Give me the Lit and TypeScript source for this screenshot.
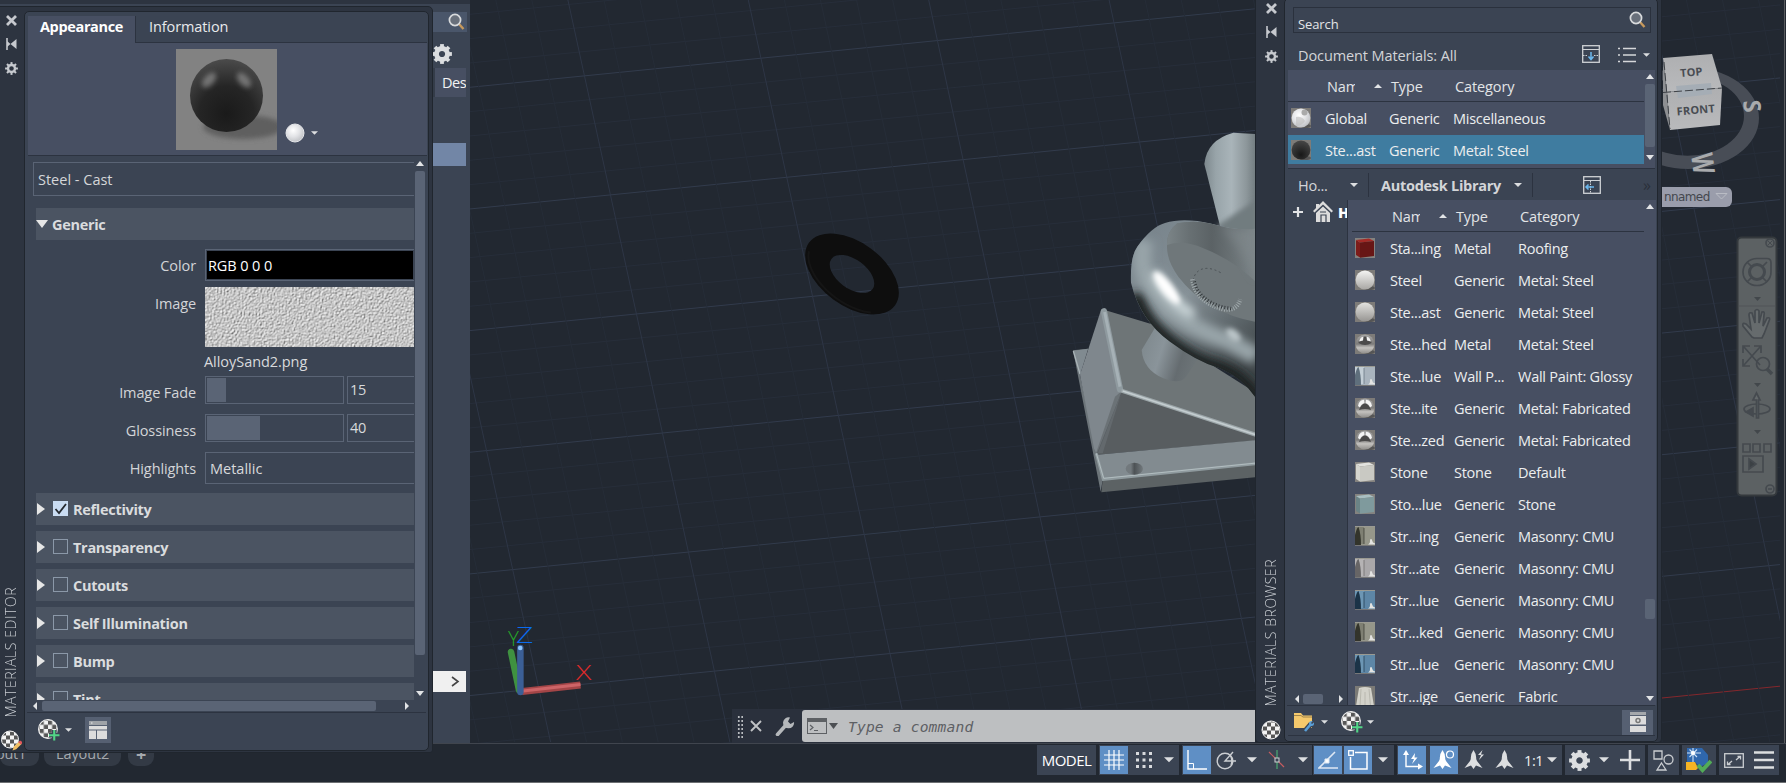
import { LitElement, html, svg, css, nothing } from "lit";
import { customElement } from "lit/decorators.js";

type Material = { kind: string; name: string; type: string; category: string };

const LIBRARY: Material[] = [
  { kind: "redcube", name: "Sta...ing", type: "Metal", category: "Roofing" },
  { kind: "matte", name: "Steel", type: "Generic", category: "Metal: Steel" },
  { kind: "cast", name: "Ste...ast", type: "Generic", category: "Metal: Steel" },
  { kind: "polished", name: "Ste...hed", type: "Metal", category: "Metal: Steel" },
  { kind: "paint", name: "Ste...lue", type: "Wall P...", category: "Wall Paint: Glossy" },
  { kind: "chrome", name: "Ste...ite", type: "Generic", category: "Metal: Fabricated" },
  { kind: "chrome", name: "Ste...zed", type: "Generic", category: "Metal: Fabricated" },
  { kind: "stone", name: "Stone", type: "Stone", category: "Default" },
  { kind: "bluestone", name: "Sto...lue", type: "Generic", category: "Stone" },
  { kind: "walltan", name: "Str...ing", type: "Generic", category: "Masonry: CMU" },
  { kind: "wallgray", name: "Str...ate", type: "Generic", category: "Masonry: CMU" },
  { kind: "wallblue", name: "Str...lue", type: "Generic", category: "Masonry: CMU" },
  { kind: "walltan", name: "Str...ked", type: "Generic", category: "Masonry: CMU" },
  { kind: "wallblue", name: "Str...lue", type: "Generic", category: "Masonry: CMU" },
  { kind: "fabric", name: "Str...ige", type: "Generic", category: "Fabric" },
];

const SECTIONS = [
  { label: "Reflectivity", on: true },
  { label: "Transparency", on: false },
  { label: "Cutouts", on: false },
  { label: "Self Illumination", on: false },
  { label: "Bump", on: false },
  { label: "Tint", on: false },
];

const cube = (top: string, front: string, side: string) => svg`
  <rect width="20" height="20" fill="#84827f"/>
  <path d="M1 2L5 4.500V19.500L1 17z" fill="${side}"/>
  <path d="M1 2L14 .5L19 3L5 4.500z" fill="${top}"/>
  <path d="M5 4.500L19 3V18L5 19.700z" fill="${front}"/>`;

const wall = (dark: string, mid: string, light: string) => svg`
  <rect width="20" height="20" fill="${mid}"/>
  <rect width="20" height="1" fill="#9a9a92"/>
  <path d="M0 1H9V18H0z" fill="${light}"/>
  <path d="M0 19V9Q2 1 3.500 1Q6 8 6 19z" fill="${dark}"/>
  <path d="M9 2V18" stroke="${dark}" stroke-width=".7"/>
  <path d="M13 18.500q2.500-1 2-5l1.500-.5 1.500 3.500 2 1v1z" fill="#e4e4e2"/>
  <path d="M0 19.500H20" stroke="#777" stroke-width="1"/>`;

const ball = (fill: string) => svg`
  <rect width="20" height="20" fill="#7d7b78"/>
  <ellipse cx="14" cy="18" rx="6" ry="2" fill="#555"/>
  <circle cx="10" cy="10" r="9.400" fill="${fill}"/>`;

const THUMBS: Record<string, unknown> = {
  global: svg`${ball("url(#gWhite)")}<path d="M5 9q6-1 9 4-3 5-9 5" fill="#bcbcbc" opacity=".6"/><circle cx="13.500" cy="4.500" r="3" fill="#aaa"/>`,
  dark: ball("url(#gDarkS)"),
  redcube: cube("#a42a26", "#671615", "#7d1c1a"),
  matte: ball("url(#gMatte)"),
  cast: ball("url(#gCast)"),
  polished: svg`${ball("url(#gChrome)")}<path d="M3.500 9Q4 3 10 2.500Q16 3 16.500 9Q10 13 3.500 9" fill="#4c4b4b"/><path d="M4 7.500Q5 3 8.500 2.800L8 6.500zM16 7.500Q15 3 11.500 2.800L12 6.500z" fill="#f2f2f2"/>`,
  chrome: svg`${ball("url(#gChrome)")}<path d="M4 12Q6 6 10 5.500Q14 6 16 12Q10 10 4 12" fill="#4a4949"/><path d="M3 8Q4 2 9 1.800L9.500 5Q6 6 5 9.500zM17 8Q16 2 11 1.800L10.500 5Q14 6 15 9.500z" fill="#f4f4f4"/>`,
  paint: wall("#5f6f7c", "#a9b4be", "#c3ced6"),
  stone: cube("#e2e2de", "#c9c9c3", "#d6d6d0"),
  bluestone: cube("#a9bfc2", "#7f9a9d", "#6a8386"),
  walltan: wall("#33342b", "#96978a", "#7f8073"),
  wallgray: wall("#676566", "#aaa8aa", "#b5b3b4"),
  wallblue: wall("#1b3347", "#5d86a6", "#6c96b4"),
  fabric: svg`<rect width="20" height="20" fill="#7b7a76"/><path d="M4 2Q10 0 16 2L19 20H1z" fill="#d3d2ca"/><path d="M6 3L5 20M10 6V20M14 3L15.500 20" stroke="#b5b4ab" stroke-width=".9" fill="none"/>`,
};

const thumb = (kind: string) => html`<svg class="thumb" viewBox="0 0 20 20">${THUMBS[kind]}</svg>`;

const caret = (cls = "") => html`<svg class="caret ${cls}" width="8" height="4" viewBox="0 0 8 4"><path d="M0 0H8L4 4z" fill="currentColor"/></svg>`;
const tri = (d: string, w: number, h: number) => html`<svg width=${w} height=${h} viewBox="0 0 ${w} ${h}"><path d=${d} fill="#e2e4e6"/></svg>`;
const up = () => tri("M0 5L4 0L8 5z", 8, 5);
const down = () => tri("M0 0H8L4 5z", 8, 5);
const left = () => tri("M4 0V8L0 4z", 4, 8);
const right = () => tri("M0 0V8L4 4z", 4, 8);

const teeth = (n: number, r: number, w: number) =>
  Array.from({ length: n }, (_, i) => svg`<rect x=${-w / 2} y=${-r} width=${w} height=${r * 0.5} transform="rotate(${(i * 360) / n})"/>`);
const gear = (size: number, color = "#dcdee0") => html`<svg width=${size} height=${size} viewBox="-10 -10 20 20" fill=${color}>
  ${teeth(8, 9.9, 3.8)}<circle r="5.500" fill="none" stroke=${color} stroke-width="4.800"/></svg>`;
const sun = () => html`<svg width="13" height="13" viewBox="-6.500 -6.500 13 13" fill="#c6c9ce">
  <circle r="3.500" fill="none" stroke="#c6c9ce" stroke-width="2.400"/>
  ${teeth(8, 6.4, 2)}</svg>`;
const magnifier = () => html`<svg width="17" height="18" viewBox="0 0 17 18"><path d="M11 11l4.500 5" stroke="#c7995c" stroke-width="2.400"/>
  <circle cx="7" cy="7" r="5.600" fill="#69707b" stroke="#d8dadc" stroke-width="1.700"/></svg>`;
const checker = (size: number, extra: unknown = nothing) => html`<svg width=${size} height=${size} viewBox="0 0 21 21">
  <circle cx="9.500" cy="9.500" r="9" fill="url(#check)" stroke="#eee" stroke-width="1"/>${extra}</svg>`;
const plus = svg`<path d="M15.500 10.500V20.500M10.500 15.500H20.500" stroke="#3b4453" stroke-width="4.500"/><path d="M15.500 10.500V20.500M10.500 15.500H20.500" stroke="#52d586" stroke-width="2"/>`;
const pencil = svg`<path d="M12 20.500l1.200-3.700 5.300-5.200 2.500 2.500-5.300 5.200z" fill="#f1bd62"/><path d="M17.800 12.200l1.700-1.700 2 1.200v1.800l-1 1z" fill="#e2585c"/>`;

const stripTools = () => html`
  <svg width="11" height="11" viewBox="0 0 11 11"><path d="M1 1l9 9M10 1l-9 9" stroke="#c6c9ce" stroke-width="2.800"/></svg>
  <svg width="11" height="12" viewBox="0 0 11 12"><path d="M1 0V12" stroke="#c6c9ce" stroke-width="1.600"/><path d="M1 3V9L4.500 6z M10.500 1V11L4.500 6z" fill="#c6c9ce"/></svg>
  ${sun()}`;

/** Perspective construction grid; every fifth line is a major one. */
const gridLines = () => {
  const out = [];
  for (let i = -22; i < 36; i++) {
    const y = 87.3 + i * 24.33;
    const axis = i === 30;
    out.push(svg`<path d="M${axis ? 1660 : 400} ${y - (axis ? 119 : -7)}L1780 ${y - 131}" stroke=${axis ? "#85282d" : i % 5 === 0 ? "#323b4c" : "#272e3a"}/>`);
  }
  for (let i = -6; i < 44; i++) {
    out.push(svg`<path d="M${387.5 + i * 36.08} 0L${550.6 + i * 35.86} 742" stroke=${i % 5 === 0 ? "#2e3646" : "#262d38"}/>`);
  }
  return out;
};

const RING = "M213 488Q210 410 232 380Q275 320 315 309Q370 292 455 311Q540 335 590 325V838Q550 775 480 745Q410 725 330 665Q240 600 213 488z";

const model = () => svg`<g transform="translate(1060 120) scale(.33333)">
  <path d="M433 132Q440 60 520 38L590 42V330L480 318z" fill="url(#gPost)"/>
  <path d="M470 318Q540 270 590 240V500L480 330z" fill="#717b7f" filter="url(#blur6)"/>
  <path d="M39 691L84 686 60 764 128 1080 122 1115z" fill="#6c7479"/>
  <path d="M41 692L84 686 60 764z" fill="#808a90"/>
  <path d="M40 693L60 762" stroke="#a9b3b7" stroke-width="4"/>
  <path d="M122 573L134 570 186 812 110 1002 102 985 60 764z" fill="#7f878d"/>
  <path d="M134 570L286 616 400 700 590 820V945L186 812z" fill="#6e7577"/>
  <path d="M186 812L590 945V962L112 1004z" fill="#585d60"/>
  <path d="M186 812L165 830 108 1000 128 1000z" fill="#666d71" opacity=".8"/>
  <path d="M132 574L180 808" stroke="#8f9a9f" stroke-width="19" stroke-linecap="round"/>
  <path d="M134 576L180 800" stroke="#a6b1b6" stroke-width="9" filter="url(#blur2)"/>
  <path d="M184 812L590 945" stroke="#9da7aa" stroke-width="12" filter="url(#blur2)"/>
  <path d="M188 813L590 945" stroke="#c4cdd0" stroke-width="5" filter="url(#blur1)"/>
  <path d="M112 1004L590 960V1032L128 1080z" fill="#828b90"/>
  <path d="M128 1080L590 1030V1071L124 1117z" fill="#5c6264"/>
  <path d="M109 1000L130 1078L590 1031" fill="none" stroke="#8f9a9e" stroke-width="9"/>
  <path d="M109 1000L131 1075L590 1029" fill="none" stroke="#b2bdc0" stroke-width="3"/>
  <ellipse cx="223" cy="1046" rx="26" ry="18" fill="url(#gHole)"/>
  <path d="M286 622L245 690Q250 750 310 775Q360 795 378 770L420 708z" fill="url(#gPin)"/>
  <path d="${RING}" fill="url(#gRing)"/>
  <clipPath id="ringClip"><path d="${RING}"/></clipPath>
  <g clip-path="url(#ringClip)">
    <path d="M225 520Q240 600 325 668Q400 730 480 750Q550 780 595 850" fill="none" stroke="#1c2224" stroke-width="56" filter="url(#blur14)"/>
    <path d="M255 360Q225 450 300 530Q370 620 500 660L590 710" fill="none" stroke="#98a4a9" stroke-width="54" filter="url(#blur14)"/>
    <path d="M285 460Q320 540 400 585" fill="none" stroke="#cfdadd" stroke-width="30" filter="url(#blur14)"/>
    <ellipse cx="320" cy="503" rx="60" ry="18" transform="rotate(52 320 503)" fill="#fff" filter="url(#blur6)"/>
    <ellipse cx="520" cy="645" rx="26" ry="14" transform="rotate(40 520 645)" fill="#bcc6c9" filter="url(#blur6)"/>
    <path d="M592 640V800" stroke="#b6c0c5" stroke-width="26" filter="url(#blur6)"/>
    <path d="M352 310Q320 335 321 375Q319 420 355 470Q440 580 590 606V325Q530 335 455 311Q400 300 352 310z" fill="#6f777a"/>
    <path d="M352 310Q320 335 321 375Q370 358 430 385Q520 420 590 488V325Q530 335 455 311Q400 300 352 310z" fill="url(#gInner)"/>
    <path d="M484 318Q540 330 590 322V480Q550 400 484 318z" fill="#858e92" opacity=".5" filter="url(#blur14)"/>
  </g>
  <path d="M482 458Q440 435 415 453Q400 465 398 490" fill="none" stroke="#444b4e" stroke-width="2.500" stroke-dasharray="6 8"/>
  <path d="M397 478Q405 545 490 568Q530 575 541 538" fill="none" stroke="#9fa8ab" stroke-width="13" stroke-dasharray="3 4"/>
  <path d="M403 484Q414 540 490 562L515 566" fill="none" stroke="#34393c" stroke-width="10" stroke-dasharray="3 6"/>
</g>`;

const navBar = () => svg`<g transform="translate(1737 237)" fill="none" stroke="#454a4f" stroke-width="1.700">
  <rect x=".5" y=".5" width="39" height="258" rx="4" fill="#5c6163" stroke="#34393d" stroke-width="2"/>
  <circle cx="33" cy="6" r="4"/><path d="M31 4l4 4M35 4l-4 4" stroke-width="1"/>
  <path d="M20 21.500H30Q34 21.500 34 26V35A14 13.500 0 1 1 20 21.500z"/><circle cx="20" cy="35" r="7.500" stroke-width="3"/><path d="M10 25l5 5M10 45l5-5M30 45l-5-5M30 25l-5 5"/>
  <path d="M2 69H38M2 253" stroke="#505559" stroke-width="1"/>
  <path d="M17 60h7l-3.500 4zM17 146h7l-3.500 4zM17 193h7l-3.500 4z" fill="#42474b" stroke="none"/>
  <path d="M15 100L6 89Q5 85 9 87L14 92L12 78Q12 75 15 76L18 86V74Q20 71 22 74V86L25 75Q28 74 27 78L26 89L30 81Q34 80 32 84L27 97L25 101H17z" fill="#666b6d"/>
  <path d="M7 110L23 128M23 110L7 128M6 116V109H13M17 109H24V116M6 122V129H13"/><circle cx="26" cy="127" r="6.500"/><path d="M30 132l5 5" stroke-width="3.500"/>
  <ellipse cx="20" cy="172" rx="13" ry="5"/><path d="M19.500 181V163H16L19.500 156L23 163H21.500V181z" fill="#64696b"/><path d="M9 175l7-4v8z" fill="#454a4f"/>
  <path d="M6 207h7v8H6zM16 207h7v8h-7zM27 207h7v8h-7zM6 219H26V235H6z"/><path d="M12 222v10l7-5z" fill="#3c4145"/>
  <circle cx="33" cy="252" r="4"/><path d="M31 252h4" stroke-width="1.500"/>
</g>`;

@customElement("app-root")
export class AppRoot extends LitElement {
  static styles = css`
    :host { display: block; position: relative; width: 1786px; height: 783px; overflow: hidden; background: #222831;
      font-family: "Open Sans", "Noto Sans", sans-serif; font-size: 14.5px; letter-spacing: -0.25px; color: #e3e5e7; }
    * { box-sizing: border-box; }
    svg { display: block; flex: none; }
    .scene { position: absolute; left: 0; top: 0; background: #222831; }
    .window { position: absolute; }
    .grow { flex: 1; }
    .col { display: flex; flex-direction: column; }
    .row { display: flex; align-items: center; }
    .caret { color: #dcdee0; }

    /* layer palette behind the editor */
    .layers { left: 0; top: 0; width: 470px; height: 744px; background: #3b4453; border-top: 4px solid #2d3440; border-bottom: 1px solid #4c5360; padding-left: 433px; }
    .layers .find { margin-top: 8px; height: 20px; width: 34px; background: #4a566a; padding: 1px 0 0 15px; }
    .layers .cog { margin-top: 12px; margin-left: -1px; }
    .layers .head { margin-top: 4px; width: 33px; height: 29px; background: #474f62; border-left: 2px solid #343c49; padding-left: 7px; overflow: hidden; color: #f2f3f4; }
    .layers .head { line-height: 29px; letter-spacing: -0.4px; }
    .layers .pick { margin-top: 46px; width: 33px; height: 23px; background: #7286a6; }
    .layers .more { margin-top: 505px; width: 33px; height: 21px; background: #f0f0f0; padding-left: 18px; }

    .layouts { left: 0; top: 744px; height: 22px; width: 160px; gap: 5px; align-items: stretch; color: #a5a9ae; }
    .layouts span { background: #333a45; border-radius: 0 0 9px 9px; line-height: 20px; }
    .layouts .l1 { width: 39px; overflow: hidden; direction: rtl; padding-right: 13px; }
    .layouts .l2 { width: 77px; padding-left: 12px; letter-spacing: -0.1px; }
    .layouts .add { width: 26px; text-align: center; font-weight: 700; font-size: 18px; margin-left: 2px; }

    /* palette frames */
    .palette { background: #2d3440; border: 1px solid #20262e; display: flex; }
    .strip { width: 24px; align-items: center; }
    .strip .tools { display: flex; flex-direction: column; gap: 12px; align-items: center; }
    .strip .title { writing-mode: vertical-rl; transform: rotate(180deg); color: #c9cdd2; font-weight: 300; line-height: 18px; font-size: 14px; white-space: nowrap; }
    .body { background: #3b4453; border: 1px solid #20262e; border-radius: 5px; }

    .editor { left: -1px; top: 6px; width: 434px; height: 747px; border-radius: 0 5px 3px 0; border-color: #20262e; }
    .editor .strip { padding: 8px 2px 1px 0; }
    .editor .title { letter-spacing: 0.55px; }
    .editor .body { width: 405px; height: 740px; margin-top: 4px; padding: 4px 2px 0; }
    .tabs { height: 27px; margin-left: 1px; width: 399px; color: #e8eaec; }
    .tab { width: 108px; height: 27px; background: #474f62; border-right: 1px solid #2c3340; font-weight: 700; text-align: center; line-height: 22px; color: #fff; letter-spacing: -0.35px; }
    .tab2 { flex: 1; height: 27px; border-bottom: 1px solid #2c3340; padding-left: 13px; line-height: 21px; letter-spacing: -0.1px; }
    .preview { height: 113px; width: 399px; margin-left: 1px; background: #474f62; border-bottom: 1px solid #2c3340; display: flex; padding: 6px 0 0 148px; }
    .preview .pick { margin: 74px 0 0 8px; gap: 6px; height: 20px; }
    .preview .caret { width: 7px; }
    .scroller { height: 556px; margin-left: 6px; width: 393px; display: grid; grid-template: 1fr 12px / 382px 10px; }
    .form { overflow: hidden; padding-top: 6px; width: 381px; }
    .name { height: 34px; border: 1px solid #5a6475; border-right: 0; line-height: 33px; padding-left: 4px; color: #d5d7d9; letter-spacing: 0; }
    .section { height: 32px; margin: 0 0 6px 3px; background: #4b5462; display: flex; align-items: center; font-weight: 700; letter-spacing: -0.3px; color: #dadcde; }
    .section.first { margin: 12px 0 9px 3px; gap: 4px; padding-bottom: 0; }
    .section .box { width: 15px; height: 15px; border: 1px solid #8b98a8; margin: 0 5px 1px 8px; }
    .section .box.on { background: #c9dcf2; border-color: #c9dcf2; }
    .field { display: grid; grid-template-columns: 163px 209px; column-gap: 9px; }
    .label { text-align: right; color: #d3d5d8; line-height: 20px; letter-spacing: -0.1px; }
    .input { border: 1px solid #5a6475; border-right: 0; color: #d8dadc; padding-left: 4px; }
    .f1 { height: 38px; } .f1 .label { padding-top: 7px; }
    .f1 .input { height: 32px; padding: 1px 1px 1px 1px; }
    .f1 .black { background: #000; height: 28px; line-height: 29px; color: #fff; padding-left: 1px; margin: 0; letter-spacing: -0.1px; }
    .f2 { height: 89px; } .f2 .label { padding-top: 7px; }
    .f2 .file { line-height: 29px; color: #d8dadc; margin-left: -1px; letter-spacing: -0.05px; }
    .f3 { height: 38px; } .f3 .label { padding-top: 7px; }
    .f3 .pair { display: grid; grid-template-columns: 139px 67px; gap: 3px; height: 28px; }
    .f3 .track { border: 1px solid #5a6475; padding: 1px; }
    .f3 .fill { height: 24px; background: #5a6475; }
    .f3 .input { line-height: 26px; padding-left: 2px; }
    .f4 { height: 41px; } .f4 .label { padding-top: 7px; }
    .f4 .input { height: 32px; line-height: 31px; letter-spacing: 0; }
    .vbar { display: flex; flex-direction: column; align-items: center; }
    .vbar .thumbv { width: 10px; background: #5a6475; border-radius: 2px; }
    .editor .vbar { padding-top: 5px; }
    .editor .vbar .thumbv { height: 484px; margin: 5px 0 36px; }
    .hbar { display: flex; align-items: center; }
    .hbar .thumbh { height: 10px; background: #5a6475; border-radius: 2px; }
    .editor .hbar .thumbh { width: 334px; margin: 0 29px 0 5px; }
    .etool { border-top: 1px solid #2c3340; height: 36px; padding: 0 0 1px 11px; gap: 5px; }
    .etool .btn, .btool .btn { background: #566072; display: grid; place-items: center; }
    .etool .caret, .btool .caret { width: 7px; }
    .etool .btn { width: 26px; height: 26px; margin-left: 8px; }

    /* browser palette */
    .browser { left: 1255px; top: -3px; width: 407px; height: 746px; border-radius: 0 0 4px 4px; }
    .browser .strip { width: 28px; padding: 5px 0 0 2px; }
    .browser .title { letter-spacing: 0.55px; margin-top: 0; }
    .browser .body { width: 374px; height: 744px; padding: 8px 2px 0; }
    .search { margin: 0 4px 0 6px; height: 26px; border: 1px solid #2a313d; display: flex; align-items: center; padding: 7px 4px 0 4px; font-size: 13px; justify-content: space-between; letter-spacing: -0.1px; }
    .search svg { margin-top: -8px; }
    .docs { height: 37px; padding: 7px 5px 0 11px; color: #d3d5d8; letter-spacing: -0.1px; }
    .docs .ic { margin-right: 18px; margin-top: -2px; }
    .docs .list { margin-right: 7px; }
    .docs .caret { width: 7px; }
    .table { background: #474f62; color: #eceeef; white-space: nowrap; }
    .doc { height: 99px; margin-left: 1px; display: grid; grid-template-columns: 356px 12px; border-bottom: 1px solid #2c3340; }
    .thead { display: grid; align-items: center; border-bottom: 1px solid #2c3340; color: #e3e5e7; height: 32px; padding: 1px 0 0 39px; letter-spacing: -0.12px; }
    .thead.a { grid-template-columns: 28px 19px 17px 64px 1fr; }
    .thead.b { margin-left: 4px; grid-template-columns: 28px 19px 17px 64px 1fr; padding-left: 40px; }
    .nam { overflow: hidden; width: 28px; }
    .item { display: grid; align-items: center; grid-template-columns: 34px 64px 64px 1fr; height: 32px; padding: 1px 0 0 3px; }
    .item .thumb { width: 20px; height: 20px; margin-bottom: 1px; }
    .item.sel { background: #3f7ca0; height: 29px; margin-top: 1px; padding-top: 2px; }
    .lib .item { padding-left: 7px; padding-top: 0; grid-template-columns: 35px 64px 64px 1fr; }
    .lib .item .thumb { margin-bottom: 0; }
    .doc .vbar { padding: 4px 0 0; }
    .doc .vbar .thumbv { height: 63px; margin: 5px 0 8px; }
    .libbar { height: 31px; padding: 1px 0 0 11px; color: #d3d5d8; }
    .libbar .ho { width: 52px; }
    .libbar .sep { width: 1px; height: 24px; background: #2c3340; margin-left: 10px; }
    .libbar .lib-name { margin-left: 12px; width: 133px; font-weight: 700; letter-spacing: -0.28px; }
    .libbar .dock { margin-left: 50px; margin-top: -1px; } .libbar .more { margin-left: 42px; color: #2a303a; font-size: 16px; }
    .pane { display: grid; grid-template-columns: 61px 308px; height: 506px; border-bottom: 1px solid #2c3340; }
    .tree { border-right: 1px solid #2c3340; overflow: hidden; display: flex; flex-direction: column; justify-content: space-between; }
    .tree .node { display: flex; align-items: center; gap: 10px; padding: 1px 0 0 6px; color: #fff; font-weight: 700; }
    .tree .node b { margin-left: -5px; margin-top: 1px; }
    .tree .hbar { padding: 0 4px 1px 8px; gap: 4px; margin-bottom: 0; }
    .tree .thumbh { width: 20px; margin-right: 12px; }
    .lib { display: grid; grid-template-columns: 296px 12px; height: 505px; overflow: hidden; }
    .lib .rows { height: 473px; overflow: hidden; }
    .lib .vbar { padding-top: 4px; }
    .lib .vbar .thumbv { height: 20px; margin: 390px 0 77px; }
    .btool { height: 30px; margin-left: 1px; padding: 3px 2px 0 6px; border-bottom: 1px solid #2c3340; }
    .btool .btn { width: 31px; height: 25px; }
    .btool .a1 { margin: 0 13px 0 6px; }
    .btool .a2 { margin-left: 4px; }

    /* command line */
    .command { left: 732px; top: 709px; width: 523px; height: 34px; background: #2a303c; display: flex; align-items: center; padding: 0 0 0 5px; }
    .command .grip { width: 6px; height: 23px; margin-right: 7px; background: radial-gradient(circle, #b9bcc0 1px, transparent 1.3px) 0 0 / 3.500px 4px; }
    .command .entry { flex: 1; height: 32px; margin-left: 7px; background: #bdbfc1; border-radius: 3px 0 0 3px; display: flex; align-items: center; padding-left: 5px; color: #5d6064;
      font-family: "DejaVu Sans Mono", monospace; font-style: italic; font-size: 14.6px; letter-spacing: 0.17px; }
    .command .entry svg:nth-of-type(2) { margin: 0 10px 0 2px; }

    /* status bar */
    .status { left: 432px; top: 743px; width: 1354px; height: 40px; background: #222831; border-top: 1px solid #40454e; border-bottom: 1px solid #6d7073; padding: 1px 0 0 605px; display: flex; gap: 3px; }
    .floor { left: 0; top: 782px; height: 1px; width: 1786px; background: #6d7073; }
    .group { height: 30px; background: #3b4453; display: flex; align-items: center; padding: 0 1px; }
    .cell { width: 28px; height: 28px; display: grid; place-items: center; margin-right: 2px; }
    .cell.hot { background: #5f8fc5; }
    .group .caret { width: 10px; height: 5.500px; }
    .g0 { width: 59px; color: #fff; justify-content: center; letter-spacing: -0.5px; font-size: 15px; }
    .g1 { width: 80px; } .g1 .caret { margin-left: 4px; }
    .g2 { width: 130px; } .g2 .c1 { margin: 0 5px 0 4px; } .g2 .c2 { margin-left: 6px; }
    .g3 { width: 81px; margin-left: -2px; } .g3 .caret { margin-left: 4px; }
    .g4 { width: 165px; } .g4 .cell:nth-child(1) { margin-right: 4px; } .g4 .cell:nth-child(4) { margin-right: 1px; } .g4 span { margin: 0 4px 0 5px; color: #eceeef; letter-spacing: -0.4px; }
    .g5 { width: 50px; padding-left: 4px; gap: 9px; }
    .g6 { width: 30px; margin-left: -3px; justify-content: center; } .g7 { width: 31px; justify-content: center; } .g8 { width: 34px; justify-content: center; }
    .g9 { width: 60px; padding-left: 5px; gap: 10px; }
  `;

  render() {
    return html`
      ${this.scene()}
      ${this.layers()}
      <div class="window layouts row"><span class="l1">Layout1</span><span class="l2">Layout2</span><span class="add">+</span></div>
      ${this.command()} ${this.status()}
      <div class="window floor"></div>
      ${this.editor()} ${this.browser()}
    `;
  }

  private scene() {
    return html`<svg class="scene" width="1786" height="783" viewBox="0 0 1786 783">
      <defs>
        <linearGradient id="gPost"><stop offset="0" stop-color="#7d888d"/><stop offset=".22" stop-color="#98a4a9"/><stop offset=".52" stop-color="#a9b4b9"/><stop offset=".8" stop-color="#8d979b"/><stop offset="1" stop-color="#6f797d"/></linearGradient>
        <linearGradient id="gPin" x1="0" y1=".3" x2="1" y2=".6"><stop offset="0" stop-color="#7f898e"/><stop offset=".35" stop-color="#8a949a"/><stop offset=".7" stop-color="#656c70"/><stop offset="1" stop-color="#6e7679"/></linearGradient>
        <linearGradient id="gRing" x1="0" y1="0" x2=".6" y2="1"><stop offset="0" stop-color="#76828a"/><stop offset=".5" stop-color="#859096"/><stop offset="1" stop-color="#3f4649"/></linearGradient>
        <linearGradient id="gInner"><stop offset="0" stop-color="#7b8487"/><stop offset=".25" stop-color="#687073"/><stop offset=".5" stop-color="#5b6265"/><stop offset="1" stop-color="#7b8487"/></linearGradient>
        <linearGradient id="gHole"><stop offset=".3" stop-color="#72797d"/><stop offset=".5" stop-color="#4d5255"/><stop offset="1" stop-color="#72797d"/></linearGradient>
        <radialGradient id="gBlack" cx=".5" cy=".75" r=".75"><stop offset="0" stop-color="#1a1a1a"/><stop offset=".5" stop-color="#252525"/><stop offset="1" stop-color="#4b4b4b"/></radialGradient>
        <radialGradient id="gDarkS" cx=".5" cy=".75" r=".8"><stop offset="0" stop-color="#181818"/><stop offset="1" stop-color="#4a4a4a"/></radialGradient>
        <radialGradient id="gWhite" cx=".4" cy=".35" r=".65"><stop offset="0" stop-color="#fff"/><stop offset=".55" stop-color="#e2e3e6"/><stop offset="1" stop-color="#c2c4c8"/></radialGradient>
        <linearGradient id="gMatte" x2="0" y2="1"><stop offset="0" stop-color="#f4f4f2"/><stop offset="1" stop-color="#a9a7a4"/></linearGradient>
        <linearGradient id="gCast" x2="0" y2="1"><stop offset="0" stop-color="#e2e2df"/><stop offset="1" stop-color="#979592"/></linearGradient>
        <linearGradient id="gChrome" x2="0" y2="1"><stop offset="0" stop-color="#a8a8a8"/><stop offset=".5" stop-color="#7c7b7a"/><stop offset=".7" stop-color="#c4c2bf"/><stop offset="1" stop-color="#918f8c"/></linearGradient>
        <linearGradient id="gFace" x2="0" y2="1"><stop offset="0" stop-color="#aeafb1"/><stop offset="1" stop-color="#b9babc"/></linearGradient>
        <pattern id="check" width="8" height="8" patternUnits="userSpaceOnUse" x="1.500" y="1.500"><rect width="8" height="8" fill="#f4f4f4"/><path d="M0 0h4v4H0zM4 4h4v4H4z" fill="#565656"/></pattern>
        <filter id="blur1"><feGaussianBlur stdDeviation="1"/></filter>
        <filter id="blur2"><feGaussianBlur stdDeviation="2"/></filter>
        <filter id="blur6" x="-50%" y="-50%" width="200%" height="200%"><feGaussianBlur stdDeviation="8"/></filter>
        <filter id="blur14" x="-50%" y="-50%" width="200%" height="200%"><feGaussianBlur stdDeviation="14"/></filter>
        <filter id="soft" x="-50%" y="-50%" width="200%" height="200%"><feGaussianBlur stdDeviation="2.500"/></filter>
        <filter id="sand" x="0" y="0" width="100%" height="100%" color-interpolation-filters="sRGB"><feTurbulence type="fractalNoise" baseFrequency=".6" numOctaves="2" seed="4"/>
          <feDiffuseLighting surfaceScale="1.100" diffuseConstant="1" lighting-color="#fbfbfb"><feDistantLight azimuth="225" elevation="52"/></feDiffuseLighting></filter>
        <clipPath id="modelClip"><rect x="1000" y="100" width="255" height="420"/></clipPath>
        <clipPath id="gridClip"><rect x="470" y="0" width="1310" height="743"/></clipPath>
      </defs>
      <g clip-path="url(#gridClip)">${gridLines()}</g>
      <g clip-path="url(#modelClip)">${model()}</g>
      <g transform="translate(852 274) rotate(36.200)">
        <path fill-rule="evenodd" fill="#0e0e0e" d="M-53.200 0A53.200 31.700 0 1 1 53.200 0A53.200 31.700 0 1 1 -53.200 0zM-25.500 0A25.500 14.500 0 1 0 25.500 0A25.500 14.500 0 1 0 -25.500 0z"/>
        <path d="M-48 7A50 27 0 0 0 38 20" fill="none" stroke="#151515" stroke-width="2"/>
      </g>
      <path d="M511 652L519 690" stroke="#3f9140" stroke-width="6.500" stroke-linecap="round"/>
      <path d="M522 691.500L580.500 685" stroke="#a34547" stroke-width="7"/><path d="M523 691L580.500 684.500" stroke="#cd6467" stroke-width="3"/>
      <path d="M520.400 648V692" stroke="#3b5f96" stroke-width="6.500" stroke-linecap="round"/><circle cx="520.200" cy="648" r="2.300" fill="#8cc4ff"/>
      <g font-family="Open Sans" font-weight="300" font-size="20.500">
        <text x="508" y="645.500" fill="#25a52a">Y</text><text x="516" y="642.500" fill="#0a6bf0" font-size="22" textLength="17" lengthAdjust="spacingAndGlyphs">Z</text><text x="576" y="680" fill="#e02a2a" textLength="15" lengthAdjust="spacingAndGlyphs">X</text>
      </g>
      <path fill-rule="evenodd" fill="#484d56" d="M1617 118A71 51 0 1 1 1759 118A71 51 0 1 1 1617 118zM1631 116A56 39.500 0 1 0 1744 116A56 39.500 0 1 0 1631 116z"/>
      <g fill="url(#gFace)"><path d="M1663 58L1712 54L1722 88L1667 92z"/><path d="M1667 92L1722 88L1720 125L1670 130z"/><path d="M1663 60L1667 92L1670 130L1663 105z" fill="#8e9093"/></g>
      <path d="M1676 86L1711 83L1712 94L1678 98z" fill="#a5adb5"/>
      <path d="M1663 92.500L1722 88M1664 62L1670 129" stroke="#3e4247" stroke-dasharray="8 3" fill="none"/>
      <g font-family="Open Sans" font-weight="700" fill="#484c52" font-size="11"><text transform="translate(1680.500 77) rotate(-5)" textLength="22">TOP</text><text transform="translate(1677 115.500) rotate(-5)" textLength="38">FRONT</text></g>
      <g font-family="Open Sans" font-weight="700" fill="#a9abad"><text transform="translate(1743 101) rotate(84)" font-size="24" textLength="12" lengthAdjust="spacingAndGlyphs">S</text><text transform="translate(1691 155) rotate(82)" font-size="30" textLength="20" lengthAdjust="spacingAndGlyphs">W</text></g>
      <rect x="1640" y="187" width="92" height="20" rx="6" fill="#9a9dab"/><path d="M1716 193.500H1727L1721.500 199z" fill="none" stroke="#b9bcc4"/>
      <text x="1664" y="201" font-family="DejaVu Sans" font-size="12" fill="#44474e" textLength="46">nnamed</text>
      ${navBar()}
      <rect x="1784" width="1" height="783" fill="#595b5e"/>
    </svg>`;
  }

  private layers() {
    return html`<div class="window layers">
      <div class="find">${magnifier()}</div>
      <div class="cog">${gear(20)}</div>
      <div class="head">Des</div>
      <div class="pick"></div>
      <div class="more"><svg width="9" height="21" viewBox="0 0 9 21"><path d="M1 6L7 10.500L1 15" fill="none" stroke="#444" stroke-width="1.600"/></svg></div>
    </div>`;
  }

  private editor() {
    return html`<div class="window palette editor">
      <div class="strip col">
        <div class="tools">${stripTools()}</div><div class="grow"></div>
        <div class="title">MATERIALS EDITOR</div>
        <svg width="22" height="33" viewBox="0 -12 21 33"><circle cx="9.500" cy="9.500" r="8.500" fill="url(#check)" stroke="#eee"/>${pencil}</svg>
      </div>
      <div class="body">
        <div class="tabs row"><div class="tab">Appearance</div><div class="tab2">Information</div></div>
        <div class="preview">
          <svg width="101" height="101" viewBox="0 0 101 101"><rect width="101" height="101" fill="#828282"/>
            <ellipse cx="67" cy="78" rx="40" ry="12" fill="#5f5f5f" filter="url(#soft)"/>
            <circle cx="50.500" cy="46.500" r="36.500" fill="url(#gBlack)"/>
            <g fill="#8a8a8a" opacity=".75" filter="url(#soft)"><ellipse cx="33" cy="31" rx="5" ry="9" transform="rotate(42 33 31)"/><ellipse cx="68" cy="31" rx="5" ry="9" transform="rotate(-42 68 31)"/></g></svg>
          <div class="pick row"><svg width="20" height="20" viewBox="0 0 20 20"><circle cx="10" cy="10" r="9" fill="url(#gWhite)" stroke="#e6e7ea"/></svg>
          ${caret()}</div>
        </div>
        <div class="scroller">
          <div class="form">
            <div class="name">Steel - Cast</div>
            <div class="section first"><svg width="12" height="8" viewBox="0 0 12 8"><path d="M0 0H12L6 8z" fill="#e6e6e6"/></svg>Generic</div>
            <div class="field f1"><div class="label">Color</div><div class="input"><div class="black">RGB 0 0 0</div></div></div>
            <div class="field f2"><div class="label">Image</div><div><svg width="209" height="60"><rect width="209" height="60" filter="url(#sand)"/></svg><div class="file">AlloySand2.png</div></div></div>
            ${[["Image Fade", 15, 19], ["Glossiness", 40, 53]].map(([label, value, px]) => html`<div class="field f3"><div class="label">${label}</div>
              <div class="pair"><div class="track"><div class="fill" style="width:${px}px"></div></div><div class="input">${value}</div></div></div>`)}
            <div class="field f4"><div class="label">Highlights</div><div class="input">Metallic</div></div>
            ${SECTIONS.map((s) => html`<div class="section"><svg width="9" height="12" viewBox="0 0 9 12"><path d="M1 0V12L9 6z" fill="#e6e6e6"/></svg>
              <div class="box ${s.on ? "on" : ""}">${s.on ? html`<svg width="13" height="13" viewBox="0 0 13 13"><path d="M1.500 7L5 11L12 2" fill="none" stroke="#252a30" stroke-width="1.800"/></svg>` : nothing}</div>${s.label}</div>`)}
          </div>
          <div class="vbar">${up()}<div class="thumbv"></div>${down()}</div>
          <div class="hbar">${left()}<div class="thumbh"></div>${right()}</div>
        </div>
        <div class="etool row">${checker(22, plus)}${caret()}
          <div class="btn"><svg width="18" height="18" viewBox="0 0 18 18"><path d="M0 0H18V4H0z" fill="#9fa3a8"/><path d="M0 5H18V8.500H0zM0 9.500H7V18H0zM8 9.500H18V18H8z" fill="#dcdcdc"/><path d="M2 1.500h1.500v1H2z" fill="#eee"/></svg></div>
        </div>
      </div>
    </div>`;
  }

  private browser() {
    return html`<div class="window palette browser">
      <div class="strip col">
        <div class="tools">${stripTools()}</div><div class="grow"></div>
        <div class="title">MATERIALS BROWSER</div>
        <svg width="21" height="35" viewBox="-.5 -10 21 35"><circle cx="9.500" cy="13" r="9" fill="url(#check)" stroke="#eee"/></svg>
      </div>
      <div class="body">
        <div class="search"><span>Search</span>${magnifier()}</div>
        <div class="docs row"><span class="grow">Document Materials: All</span>
          <div class="ic"><svg width="18" height="18" viewBox="0 0 18 18" fill="none"><rect x=".7" y=".7" width="16.600" height="16.600" stroke="#cfd2d5" stroke-width="1.300"/><path d="M1 4.500H17" stroke="#cfd2d5"/><path d="M1 10.500H6M12 10.500H17" stroke="#cfd2d5" stroke-dasharray="1.500 1"/><path d="M9 7V14M6.500 11.500L9 14.500L11.500 11.500" stroke="#6cb8ee" stroke-width="1.500"/></svg></div>
          <svg class="list" width="18" height="16" viewBox="0 0 18 16"><path d="M0 1.500h2M0 8h2M0 14.500h2M5 1.500H18M5 8H18M5 14.500H18" stroke="#d5d7da" stroke-width="1.500"/></svg>${caret()}
        </div>
        <div class="table doc">
          <div>
            <div class="thead a"><span class="nam">Name</span><span></span>${tri("M0 4L4 0L8 4z", 8, 4)}<span>Type</span><span>Category</span></div>
            ${this.item({ kind: "global", name: "Global", type: "Generic", category: "Miscellaneous" })}
            ${this.item({ kind: "dark", name: "Ste...ast", type: "Generic", category: "Metal: Steel" }, true)}
          </div>
          <div class="vbar">${up()}<div class="thumbv"></div>${down()}</div>
        </div>
        <div class="libbar row"><span class="ho">Ho...</span>${caret()}<div class="sep"></div>
          <span class="lib-name">Autodesk Library</span>${caret()}<div class="sep"></div>
          <div class="dock"><svg width="18" height="18" viewBox="0 0 18 18" fill="none"><rect x=".7" y=".7" width="16.600" height="16.600" stroke="#cfd2d5" stroke-width="1.300"/><path d="M1 4.500H17" stroke="#cfd2d5"/><path d="M7.500 5V17" stroke="#cfd2d5" stroke-dasharray="1.500 1"/><path d="M11 11H3M5.500 8.500L3 11L5.500 13.500" stroke="#6cb8ee" stroke-width="1.500"/></svg></div>
          <span class="more">»</span></div>
        <div class="pane">
          <div class="tree">
            <div class="node"><svg width="10" height="10" viewBox="0 0 10 10"><path d="M5 0V10M0 5H10" stroke="#e2e4e6" stroke-width="2.200"/></svg>
              <svg width="20" height="21" viewBox="0 0 20 21"><path d="M3 3h3v4H3z" fill="#dcdcdc"/><path d="M10 0L20 10L18.500 11.500L10 3.500L1.500 11.500L0 10z" fill="#dcdcdc"/><path d="M3 12L10 5.500L17 12V21H3z" fill="#dcdcdc"/><path d="M8 21V14H13V21M7 11H13" fill="none" stroke="#3b4453" stroke-width="1.200"/></svg><b>Home</b></div>
            <div class="hbar">${left()}<div class="thumbh"></div>${right()}</div>
          </div>
          <div class="table lib">
            <div><div class="thead b"><span class="nam">Name</span><span></span>${tri("M0 4L4 0L8 4z", 8, 4)}<span>Type</span><span>Category</span></div>
              <div class="rows">${LIBRARY.map((m) => this.item(m))}</div></div>
            <div class="vbar">${up()}<div class="thumbv"></div>${down()}</div>
          </div>
        </div>
        <div class="btool row">
          <svg width="21" height="21" viewBox="0 0 21 21"><path d="M0 1H7L9 3.500H18V16H0z" fill="#f5c96c"/><path d="M0 3.500H7L9 5H18" stroke="#8a7444" fill="none" stroke-width=".8"/><path d="M11 19L17 12" stroke="#3b4453" stroke-width="5"/><path d="M11 19L17 12" stroke="#5a9fd8" stroke-width="2.600"/><circle cx="17.500" cy="11.500" r="2.500" fill="#5a9fd8"/><path d="M17.500 11.500L20.500 8.500" stroke="#3b4453" stroke-width="1.600"/></svg>
          ${caret("a1")}${checker(22, plus)}${caret("a2")}<div class="grow"></div>
          <div class="btn"><svg width="16" height="20" viewBox="0 0 16 20"><path d="M0 0H16V3H0z" fill="#a5a8ac"/><path d="M0 4H16V12.500H0zM0 14H16V20H0z" fill="#dcdcdc"/><circle cx="8" cy="8.500" r="2" fill="none" stroke="#777" stroke-width="1.500"/></svg></div>
        </div>
      </div>
    </div>`;
  }

  private item(m: Material, selected = false) {
    return html`<div class="item ${selected ? "sel" : ""}">${thumb(m.kind)}<span>${m.name}</span><span>${m.type}</span><span>${m.category}</span></div>`;
  }

  private command() {
    return html`<div class="window command">
      <div class="grip"></div>
      <svg width="12" height="12" viewBox="0 0 12 12"><path d="M1 1L11 11M11 1L1 11" stroke="#c0c2c5" stroke-width="1.900"/></svg>
      <svg width="33" height="20" viewBox="-14 0 33 20"><path d="M1.500 18.500L10 9" stroke="#b5b8bb" stroke-width="3.600" stroke-linecap="round"/><path d="M14 1.500A5.500 5.500 0 1 0 18 6L14.500 8L12 5.500z" fill="#b5b8bb"/></svg>
      <div class="entry">
        <svg width="20" height="16" viewBox="0 0 20 16"><rect x=".5" y=".5" width="19" height="15" fill="none" stroke="#5d6064"/><path d="M0 0H20V4H0z" fill="#5d6064"/><path d="M3 7L6 9.500L3 12M7 12.500H11" fill="none" stroke="#5d6064" stroke-width="1.200"/></svg>
        <svg width="9" height="6" viewBox="0 0 9 6"><path d="M0 0H9L4.500 6z" fill="#4c4f53"/></svg>
        <span>Type a command</span>
      </div>
    </div>`;
  }

  private status() {
    const star = svg`<path d="M9.500 0Q12.500 4 12.200 9L13 11L18.500 18L12 15.500L9.500 19L7 15.500L.5 18L6 11L6.800 9Q6.500 4 9.500 0z"/>`;
    return html`<div class="window status">
      <div class="group g0">MODEL</div>
      <div class="group g1">
        <div class="cell hot"><svg width="20" height="20" viewBox="0 0 20 20"><path d="M5 0V20M10 0V20M15 0V20M0 5H20M0 10H20M0 15H20" stroke="#fff" stroke-width="1.200"/></svg></div>
        <div class="cell"><svg width="16" height="16" viewBox="0 0 16 16" fill="#d8dadd"><path d="M0 0h3v3H0zM6.500 0h3v3h-3zM13 0h3v3h-3zM0 6.500h3v3H0zM6.500 6.500h3v3h-3zM13 6.500h3v3h-3zM0 13h3v3H0zM6.500 13h3v3h-3zM13 13h3v3h-3z"/></svg></div>${caret()}
      </div>
      <div class="group g2">
        <div class="cell hot"><svg width="20" height="20" viewBox="0 0 20 20" fill="none" stroke="#fff"><path d="M1 0V19H20" stroke-width="1.400"/><path d="M1 13.500H6.500V19"/></svg></div>
        <div class="cell"><svg width="22" height="20" viewBox="0 0 22 20" fill="none" stroke="#cbced2" stroke-width="1.400"><circle cx="9" cy="11" r="7.800"/><path d="M20 11H9L17 2M14.500 6Q17 10 15 15"/></svg></div>${caret("c1")}
        <div class="cell"><svg width="18" height="20" viewBox="0 0 18 20" fill="none"><path d="M10 0V19" stroke="#4fbf78"/><path d="M2 2L17 17" stroke="#c75c60" stroke-width="1.200"/><rect x="8" y="8" width="4" height="4" fill="#3b4453" stroke="#d0d2d5"/></svg></div>${caret("c2")}
      </div>
      <div class="group g3">
        <div class="cell hot"><svg width="20" height="19" viewBox="0 0 20 19" fill="none" stroke="#dfe8f3"><path d="M17 1L1 17H20" stroke-width="1.600"/><path d="M7 8h4v4H7z" fill="#fff"/></svg></div>
        <div class="cell hot"><svg width="20" height="20" viewBox="0 0 20 20" fill="none" stroke="#fff"><path d="M7 2.500H19V19H2.500V7" stroke-width="1.500"/><rect x=".7" y=".7" width="4.600" height="4.600" stroke-width="1.300"/></svg></div>${caret()}
      </div>
      <div class="group g4">
        <div class="cell hot"><svg width="21" height="20" viewBox="0 0 21 20" fill="#fff"><path d="M4 3V16.500H17" fill="none" stroke="#fff" stroke-width="1.400"/><path d="M4 0L7 5H1zM21 16.500L16 13.500V19.500z"/><path d="M13 3L9 9H12L10 14L15.500 7.500H12.500z"/></svg></div>
        <div class="cell hot"><svg width="22" height="20" viewBox="0 0 22 20" fill="#fff">${star}<circle cx="17" cy="4.500" r="3.500" fill="none" stroke="#fff" stroke-width="1.200"/></svg></div>
        <div class="cell"><svg width="21" height="20" viewBox="0 0 21 20" fill="#dcdee0">${star}<path d="M18.500 0L14 5H17L15 10L20 4.500H17z"/></svg></div>
        <div class="cell"><svg width="19" height="20" viewBox="0 0 19 20" fill="#dcdee0">${star}</svg></div>
        <span>1:1</span>${caret()}
      </div>
      <div class="group g5">${gear(21)}${caret()}</div>
      <div class="group g6"><svg width="20" height="20" viewBox="0 0 20 20"><path d="M10 0V20M0 10H20" stroke="#dcdee0" stroke-width="2.600"/></svg></div>
      <div class="group g7"><svg width="21" height="21" viewBox="0 0 21 21" fill="none" stroke="#cbced2" stroke-width="1.300"><path d="M1 1H9V9H1z"/><circle cx="15.500" cy="9.500" r="4.500"/><path d="M8.500 13L13 20H4z"/></svg></div>
      <div class="group g8"><svg width="26" height="26" viewBox="0 0 26 26"><path d="M1 1H16L22 8V16L14 20L9 15H1z" fill="#2f67ad"/><path d="M7 1V15M1 6H15M3.500 2.500L11 10M11 2.500L3.500 10" stroke="#cfe2f5" stroke-width="1.100"/><circle cx="7" cy="6" r="2" fill="#fff"/><path d="M0 15H9L12 21L10 23H0z" fill="#f4b324"/><path d="M12 18L16.500 23L25 14" fill="none" stroke="#52ab58" stroke-width="4"/></svg></div>
      <div class="group g9"><svg width="20" height="15" viewBox="0 0 20 15" fill="none" stroke="#cbced2"><rect x=".7" y=".7" width="18.600" height="13.600" stroke-width="1.300"/><path d="M12 7L16 3.500M13.500 3.500H16.500V6.500M8 8L4 11.500M3.500 8.500V11.500H6.500" stroke-width="1.300"/></svg>
        <svg width="20" height="18" viewBox="0 0 20 18"><path d="M0 1.500H20M0 9H20M0 16.500H20" stroke="#dcdee0" stroke-width="2.400"/></svg></div>
    </div>`;
  }
}
